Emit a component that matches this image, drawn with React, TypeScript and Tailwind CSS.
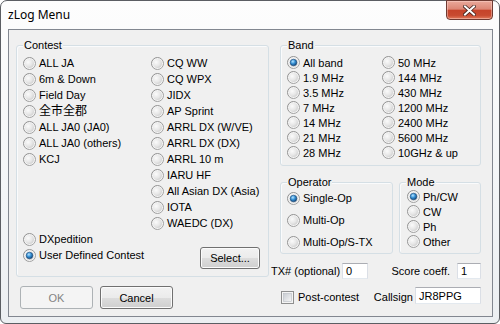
import clsx from "clsx";
import type { ReactNode } from "react";

const contestLeft = ["ALL JA", "6m & Down", "Field Day", "全市全郡", "ALL JA0 (JA0)", "ALL JA0 (others)", "KCJ"];
const contestRight = ["CQ WW", "CQ WPX", "JIDX", "AP Sprint", "ARRL DX (W/VE)", "ARRL DX (DX)", "ARRL 10 m", "IARU HF", "All Asian DX (Asia)", "IOTA", "WAEDC (DX)"];
const bandLeft = ["All band", "1.9 MHz", "3.5 MHz", "7 MHz", "14 MHz", "21 MHz", "28 MHz"];
const bandRight = ["50 MHz", "144 MHz", "430 MHz", "1200 MHz", "2400 MHz", "5600 MHz", "10GHz & up"];

const Defs = () => (
  <svg width="0" height="0" className="block">
    <defs>
      <linearGradient id="radioRing" x1="0" y1="0" x2="1" y2="1">
        <stop offset="0" stopColor="#8a8a8a" />
        <stop offset="1" stopColor="#a8a8a8" />
      </linearGradient>
      <radialGradient id="radioFill" cx="0.35" cy="0.35" r="0.75">
        <stop offset="0" stopColor="#fbfbfb" />
        <stop offset="0.6" stopColor="#e6e6e6" />
        <stop offset="1" stopColor="#cdcdcd" />
      </radialGradient>
      <radialGradient id="radioDot" cx="0.4" cy="0.35" r="0.7">
        <stop offset="0" stopColor="#b8e4ff" />
        <stop offset="0.45" stopColor="#3b95d8" />
        <stop offset="1" stopColor="#0c3f73" />
      </radialGradient>
      <linearGradient id="checkFill" x1="0" y1="0" x2="1" y2="1">
        <stop offset="0" stopColor="#c8ccd2" />
        <stop offset="1" stopColor="#f7f7f7" />
      </linearGradient>
    </defs>
  </svg>
);

const Radio = ({ checked }: { checked?: boolean }) => (
  <svg width="13" height="13" viewBox="0 0 13 13" className="shrink-0">
    <circle cx="6.5" cy="6.5" r="6" fill="#f4f4f4" stroke="url(#radioRing)" strokeWidth="1" />
    <circle cx="6.5" cy="6.5" r="4.5" fill="url(#radioFill)" />
    {checked && <circle cx="6.5" cy="6.5" r="3.3" fill="url(#radioDot)" stroke="#1b4a7a" strokeWidth="0.6" />}
  </svg>
);

const Option = ({ label, checked, h = "h-[16px]" }: { label: ReactNode; checked?: boolean; h?: string }) => (
  <div className={clsx("flex items-center", h)}>
    <Radio checked={checked} />
    <span className="ml-[3px] whitespace-nowrap">{label}</span>
  </div>
);

const Group = ({ label, className, children }: { label: string; className?: string; children: ReactNode }) => (
  <div className={clsx("relative rounded-[3px] border border-[#d5dfe5] shadow-[inset_1px_1px_0_#fafbfc]", className)}>
    <span className="absolute -top-[8px] left-[6px] bg-[#f0f0f0] px-[1px] leading-[14px]">{label}</span>
    {children}
  </div>
);

const Button = ({ children, disabled, className }: { children: ReactNode; disabled?: boolean; className?: string }) => (
  <button
    className={clsx(
      "flex items-center justify-center rounded-[3px] border",
      disabled
        ? "border-[#adb2b5] bg-[#f4f4f4] text-[#838383]"
        : "border-[#707070] bg-[linear-gradient(#f2f2f2_0%,#ebebeb_50%,#dddddd_50%,#cfcfcf_100%)] shadow-[inset_0_0_0_1px_#fbfbfb]",
      className
    )}>
    {children}
  </button>
);

const Edit = ({ value, className }: { value: string; className?: string }) => (
  <div className={clsx("flex items-center border border-t-[#abadb3] border-x-[#dbdfe6] border-b-[#e3e9ef] bg-white pl-[3px]", className)}>
    {value}
  </div>
);

export default function App() {
  return (
    <div className="h-[324px] w-[500px] bg-white">
      <Defs />
      <div className="relative h-[324px] w-[500px] rounded-t-[7px] rounded-b-[6px] border border-[#5b5e63] bg-[linear-gradient(180deg,#fdfdfd_0%,#f3f5f7_60%,#eceff2_100%)]">
        <div className="flex h-[28px] items-center pl-[7px] font-['Noto_Sans','Open_Sans',sans-serif] text-[12px] text-black">zLog Menu</div>
        <div className="absolute -top-[1px] right-[6px] flex h-[20px] w-[47px] items-center justify-center rounded-b-[4px] border border-[#6e3a32] bg-[linear-gradient(#eaa99b_0%,#dc8675_45%,#c6432a_52%,#c84b31_80%,#e27a5c_100%)] shadow-[inset_0_0_0_1px_rgba(255,220,210,0.45)]">
          <svg width="13" height="11" viewBox="0 0 13 11">
            <path d="M2 1.5 L11 9.5 M11 1.5 L2 9.5" stroke="#43231d" strokeWidth="3.6" strokeLinecap="square" />
            <path d="M2 1.5 L11 9.5 M11 1.5 L2 9.5" stroke="#ffffff" strokeWidth="2" strokeLinecap="square" />
          </svg>
        </div>

        <div className="ml-[7px] h-[288px] w-[485px] border border-[#828790] bg-[#f0f0f0] font-['Liberation_Sans','Noto_Sans_CJK_JP',sans-serif] text-[11px] leading-[14px] text-black">
          <div className="flex gap-[11px] pl-[7px] pt-[15px]">
            <div className="flex flex-col">
              <Group label="Contest" className="h-[232px] w-[253px] pl-[6px] pt-[9px]">
                <div className="flex">
                  <div className="flex w-[128px] flex-col">
                    {contestLeft.map(c => (
                      <Option key={c} label={c === "全市全郡" ? <span className="text-[12px]">{c}</span> : c} />
                    ))}
                  </div>
                  <div className="flex flex-col">
                    {contestRight.map(c => (
                      <Option key={c} label={c} />
                    ))}
                  </div>
                </div>
                <Option label="DXpedition" />
                <div className="flex items-start">
                  <Option label="User Defined Contest" checked />
                  <Button className="ml-auto mr-[8px] h-[22px] w-[60px]">Select...</Button>
                </div>
              </Group>
              <div className="ml-[4px] mt-[9px] flex gap-[7px]">
                <Button disabled className="h-[23px] w-[73px]">OK</Button>
                <Button className="h-[23px] w-[73px]">Cancel</Button>
              </div>
            </div>

            <div className="flex w-[201px] flex-col">
              <Group label="Band" className="h-[121px] pl-[6px] pt-[9px]">
                <div className="flex">
                  <div className="flex w-[95px] flex-col">
                    {bandLeft.map((b, i) => (
                      <Option key={b} label={b} checked={i === 0} h="h-[15px]" />
                    ))}
                  </div>
                  <div className="flex flex-col">
                    {bandRight.map(b => (
                      <Option key={b} label={b} h="h-[15px]" />
                    ))}
                  </div>
                </div>
              </Group>

              <div className="mt-[16px] flex gap-[6px]">
                <Group label="Operator" className="h-[72px] w-[113px] pl-[6px] pt-[4px]">
                  <Option label="Single-Op" checked h="h-[22px]" />
                  <Option label="Multi-Op" h="h-[22px]" />
                  <Option label="Multi-Op/S-TX" h="h-[22px]" />
                </Group>
                <Group label="Mode" className="h-[72px] flex-1 pl-[7px] pt-[6px]">
                  <Option label="Ph/CW" checked h="h-[15px]" />
                  <Option label="CW" h="h-[15px]" />
                  <Option label="Ph" h="h-[15px]" />
                  <Option label="Other" h="h-[15px]" />
                </Group>
              </div>

              <div className="-ml-[9px] mt-[9px] flex h-[16px] items-center">
                <span>TX# (optional)</span>
                <Edit value="0" className="ml-[2px] h-[16px] w-[26px]" />
                <span className="ml-auto">Score coeff.</span>
                <Edit value="1" className="ml-[7px] h-[16px] w-[24px]" />
              </div>

              <div className="mt-[8px] flex h-[17px] items-center">
                <svg width="13" height="13" viewBox="0 0 13 13" className="ml-[1px] mt-[3px] shrink-0">
                  <rect x="0.5" y="0.5" width="12" height="12" fill="#f4f4f4" stroke="#8e8f8f" />
                  <rect x="2.5" y="2.5" width="8" height="8" fill="url(#checkFill)" stroke="#b7bcc3" strokeWidth="0.6" />
                </svg>
                <span className="ml-[4px] mt-[3px]">Post-contest</span>
                <span className="ml-auto mt-[3px]">Callsign</span>
                <Edit value="JR8PPG" className="ml-[2px] h-[17px] w-[66px]" />
              </div>
            </div>
          </div>
        </div>
      </div>
    </div>
  );
}
